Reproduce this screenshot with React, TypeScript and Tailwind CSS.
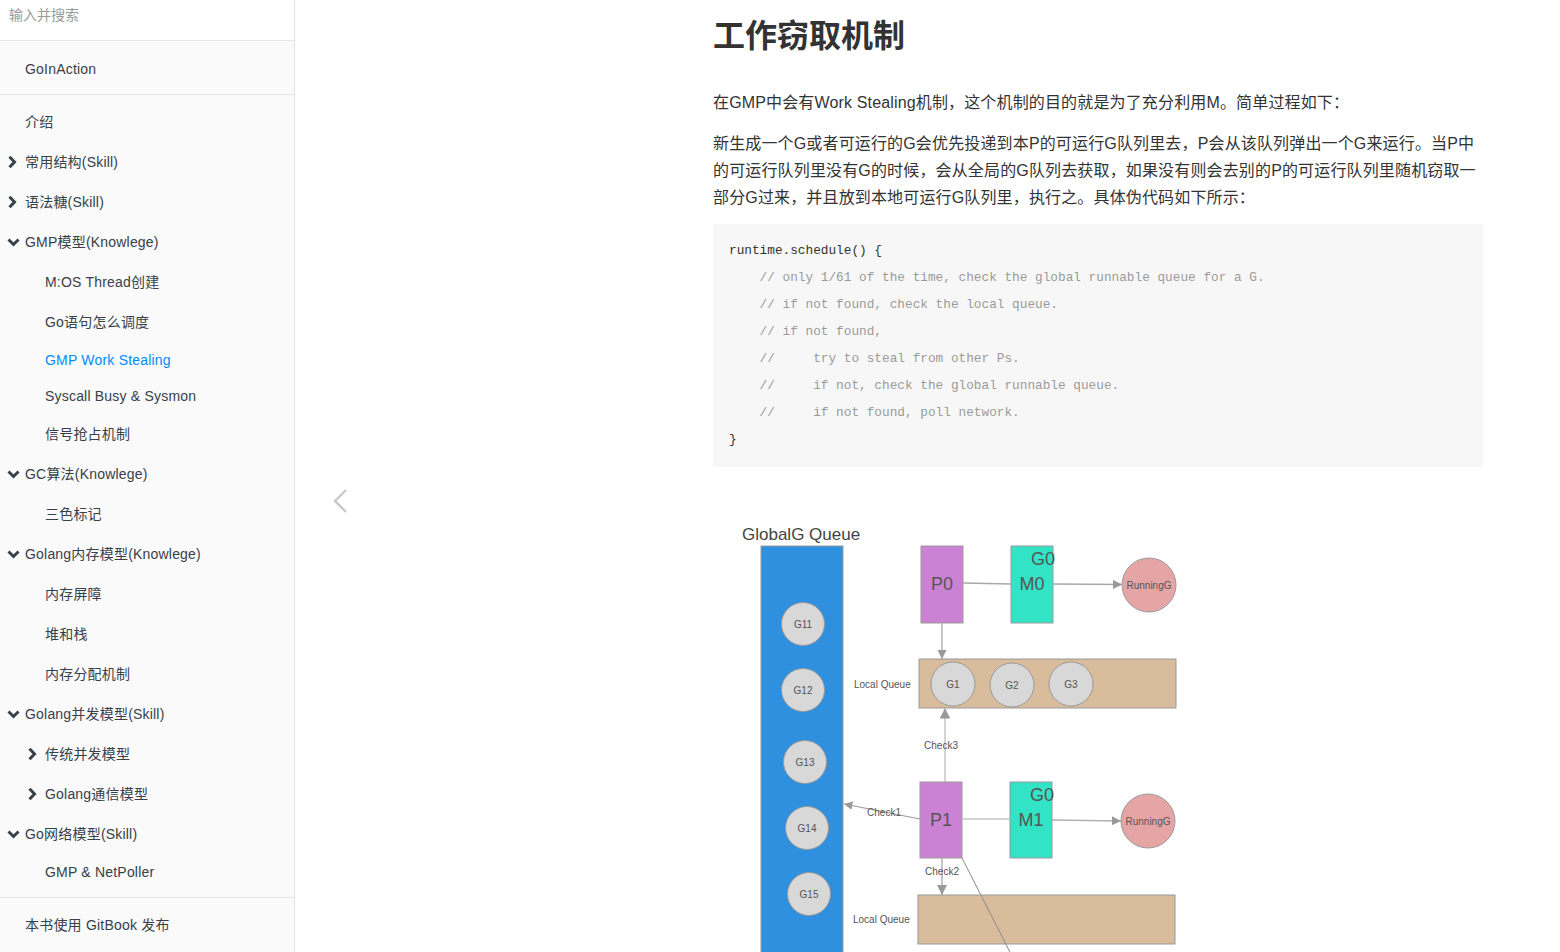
import React from 'react';

type NavItem = {
  label: string;
  level: 1 | 2;
  chevron?: 'right' | 'down';
  active?: boolean;
  tall?: boolean;
};

const nav: NavItem[] = [
  { label: '介绍', level: 1, tall: true },
  { label: '常用结构(Skill)', level: 1, chevron: 'right', tall: true },
  { label: '语法糖(Skill)', level: 1, chevron: 'right', tall: true },
  { label: 'GMP模型(Knowlege)', level: 1, chevron: 'down', tall: true },
  { label: 'M:OS Thread创建', level: 2, tall: true },
  { label: 'Go语句怎么调度', level: 2, tall: true },
  { label: 'GMP Work Stealing', level: 2, active: true },
  { label: 'Syscall Busy & Sysmon', level: 2 },
  { label: '信号抢占机制', level: 2, tall: true },
  { label: 'GC算法(Knowlege)', level: 1, chevron: 'down', tall: true },
  { label: '三色标记', level: 2, tall: true },
  { label: 'Golang内存模型(Knowlege)', level: 1, chevron: 'down', tall: true },
  { label: '内存屏障', level: 2, tall: true },
  { label: '堆和栈', level: 2, tall: true },
  { label: '内存分配机制', level: 2, tall: true },
  { label: 'Golang并发模型(Skill)', level: 1, chevron: 'down', tall: true },
  { label: '传统并发模型', level: 2, chevron: 'right', tall: true },
  { label: 'Golang通信模型', level: 2, chevron: 'right', tall: true },
  { label: 'Go网络模型(Skill)', level: 1, chevron: 'down', tall: true },
  { label: 'GMP & NetPoller', level: 2 },
];

const code: { text: string; dim?: boolean }[] = [
  { text: 'runtime.schedule() {' },
  { text: '    // only 1/61 of the time, check the global runnable queue for a G.', dim: true },
  { text: '    // if not found, check the local queue.', dim: true },
  { text: '    // if not found,', dim: true },
  { text: '    //     try to steal from other Ps.', dim: true },
  { text: '    //     if not, check the global runnable queue.', dim: true },
  { text: '    //     if not found, poll network.', dim: true },
  { text: '}' },
];

function Chevron({ dir }: { dir: 'right' | 'down' }) {
  if (dir === 'right') {
    return (
      <svg width="11" height="14" viewBox="0 0 11 14">
        <path d="M2.5 1.8 L7.5 7 L2.5 12.2" fill="none" stroke="#364149" strokeWidth="3" />
      </svg>
    );
  }
  return (
    <svg width="13" height="11" viewBox="0 0 13 11">
      <path d="M1.5 2.5 L6.5 7.5 L11.5 2.5" fill="none" stroke="#364149" strokeWidth="3" />
    </svg>
  );
}

function Sidebar() {
  return (
    <aside className="w-[295px] shrink-0 h-full bg-[#fafafa] border-r border-[#e2e2e2] flex flex-col">
      <div className="h-[41px] bg-white border-b border-[#e6e6e6]">
        <input
          placeholder="输入并搜索"
          className="w-full h-[40px] px-[9px] pt-[5px] pb-[15px] text-[14px] outline-none bg-transparent placeholder:text-[#9a9a9a]"
        />
      </div>
      <ul className="py-[10px] text-[14px] tracking-[0.2px] text-[#364149]">
        <li className="h-[36px] flex items-center pl-[25px]">GoInAction</li>
        <li className="h-px bg-[#e6e6e6] my-[7px]" />
        {nav.map((item) => (
          <li
            key={item.label}
            className={`${item.tall ? 'h-[40px]' : 'h-[36px]'} flex items-center ${
              item.level === 1 ? 'pl-[7px]' : 'pl-[27px]'
            } ${item.active ? 'text-[#008cff]' : ''}`}
          >
            <span className="w-[18px] flex items-center">
              {item.chevron && <Chevron dir={item.chevron} />}
            </span>
            <span>{item.label}</span>
          </li>
        ))}
        <li className="h-px bg-[#e6e6e6] my-[7px]" />
        <li className="h-[40px] flex items-center pl-[25px]">本书使用 GitBook 发布</li>
      </ul>
    </aside>
  );
}

function Diagram() {
  const box = '#9a9a9a';
  const line = '#a8a8a8';
  const circles = [
    { cx: 90, cy: 124, t: 'G11' },
    { cx: 90, cy: 190, t: 'G12' },
    { cx: 92, cy: 262, t: 'G13' },
    { cx: 94, cy: 328, t: 'G14' },
    { cx: 96, cy: 394, t: 'G15' },
    { cx: 240, cy: 184, t: 'G1' },
    { cx: 299, cy: 185, t: 'G2' },
    { cx: 358, cy: 184, t: 'G3' },
  ];
  return (
    <svg
      width="470"
      height="460"
      viewBox="0 0 470 460"
      className="block mt-[33px]"
      fontFamily='"Liberation Sans", Arial, sans-serif'
    >
      <defs>
        <marker id="arr" viewBox="0 0 10 10" refX="10" refY="5" markerWidth="7" markerHeight="7" orient="auto-start-reverse">
          <path d="M0 0 L10 5 L0 10 z" fill="#999" />
        </marker>
      </defs>
      <text x="29" y="40" fontSize="17" fill="#444">GlobalG Queue</text>
      <rect x="48" y="46" width="82" height="430" fill="#2e90de" stroke={box} />
      {circles.slice(0, 5).map((c) => (
        <g key={c.t}>
          <circle cx={c.cx} cy={c.cy} r="21.5" fill="#d8d8d8" stroke={box} />
          <text x={c.cx} y={c.cy + 3.5} fontSize="10" textAnchor="middle" fill="#555">{c.t}</text>
        </g>
      ))}

      {/* P0 / M0 */}
      <rect x="208" y="46" width="42" height="77" fill="#cb82d4" stroke={box} />
      <text x="229" y="90" fontSize="18" textAnchor="middle" fill="#555">P0</text>
      <rect x="298" y="46" width="42" height="77" fill="#33e3c5" stroke={box} />
      <text x="319" y="90" fontSize="18" textAnchor="middle" fill="#555">M0</text>
      <text x="330" y="65" fontSize="18" textAnchor="middle" fill="#555">G0</text>
      <line x1="250" y1="83" x2="298" y2="84" stroke={line} strokeWidth="1.3" />
      <line x1="340" y1="84" x2="409" y2="84.5" stroke={line} strokeWidth="1.3" markerEnd="url(#arr)" />
      <circle cx="436" cy="85" r="27" fill="#e5a5a5" stroke={box} />
      <text x="436" y="88.5" fontSize="10" textAnchor="middle" fill="#555">RunningG</text>
      <line x1="229" y1="123" x2="229" y2="159" stroke={line} strokeWidth="1.3" markerEnd="url(#arr)" />

      {/* Local queue 1 */}
      <text x="141" y="187.5" fontSize="10" fill="#555">Local Queue</text>
      <rect x="206" y="159" width="257" height="49" fill="#d8bc9b" stroke={box} />
      {circles.slice(5).map((c) => (
        <g key={c.t}>
          <circle cx={c.cx} cy={c.cy} r="22" fill="#d8d8d8" stroke={box} />
          <text x={c.cx} y={c.cy + 3.5} fontSize="10" textAnchor="middle" fill="#555">{c.t}</text>
        </g>
      ))}

      {/* Check3 */}
      <line x1="232" y1="282" x2="232" y2="208" stroke="#c4c4c4" strokeWidth="1.5" markerEnd="url(#arr)" />
      <text x="228" y="248.5" fontSize="10" textAnchor="middle" fill="#555">Check3</text>

      {/* P1 / M1 */}
      <rect x="207" y="282" width="42" height="76" fill="#cb82d4" stroke={box} />
      <text x="228" y="326" fontSize="18" textAnchor="middle" fill="#555">P1</text>
      <rect x="297" y="282" width="42" height="76" fill="#33e3c5" stroke={box} />
      <text x="318" y="326" fontSize="18" textAnchor="middle" fill="#555">M1</text>
      <text x="329" y="301" fontSize="18" textAnchor="middle" fill="#555">G0</text>
      <line x1="249" y1="319" x2="297" y2="319" stroke="#c4c4c4" strokeWidth="1.3" />
      <line x1="339" y1="320" x2="408" y2="321" stroke="#b0b0b0" strokeWidth="1.3" markerEnd="url(#arr)" />
      <circle cx="435" cy="321" r="27" fill="#e5a5a5" stroke={box} />
      <text x="435" y="324.5" fontSize="10" textAnchor="middle" fill="#555">RunningG</text>

      {/* Check1 */}
      <line x1="207" y1="319" x2="131" y2="304" stroke="#999" strokeWidth="1.2" markerEnd="url(#arr)" />
      <text x="171" y="315.5" fontSize="10" textAnchor="middle" fill="#555">Check1</text>

      {/* Check2 */}
      <line x1="229" y1="358" x2="229" y2="395" stroke="#b0b0b0" strokeWidth="1.5" markerEnd="url(#arr)" />
      <text x="229" y="374.5" fontSize="10" textAnchor="middle" fill="#555">Check2</text>

      {/* Local queue 2 */}
      <text x="140" y="422.5" fontSize="10" fill="#555">Local Queue</text>
      <rect x="205" y="395" width="257" height="49" fill="#d8bc9b" stroke={box} />
      <line x1="249" y1="358" x2="302" y2="462" stroke="#8a8a8a" strokeWidth="1" />
    </svg>
  );
}

export default function App() {
  return (
    <div className="flex w-full h-screen overflow-hidden bg-white text-[#333] font-['Liberation_Sans','Noto_Sans_CJK_SC',sans-serif]">
      <Sidebar />
      <main className="relative flex-1 h-full overflow-hidden">
        <button className="absolute left-[37px] top-[488px] w-[16px] h-[26px] flex items-center justify-center">
          <svg width="16" height="26" viewBox="0 0 16 26">
            <path d="M14 2 L3 13 L14 24" fill="none" stroke="#c8c8c8" strokeWidth="2.4" />
          </svg>
        </button>
        <div className="ml-[418px] w-[770px] pt-[17px]">
          <h1 className="text-[32px] leading-[38px] font-bold text-[#333]">工作窃取机制</h1>
          <p className="mt-[33.5px] text-[16px] leading-[27px] tracking-[0.15px]">
            在GMP中会有Work Stealing机制，这个机制的目的就是为了充分利用M。简单过程如下：
          </p>
          <p className="mt-[14px] text-[16px] leading-[27px] tracking-[0.15px]">
            新生成一个G或者可运行的G会优先投递到本P的可运行G队列里去，P会从该队列弹出一个G来运行。当P中
            <br />
            的可运行队列里没有G的时候，会从全局的G队列去获取，如果没有则会去别的P的可运行队列里随机窃取一
            <br />
            部分G过来，并且放到本地可运行G队列里，执行之。具体伪代码如下所示：
          </p>
          <pre className="mt-[13.5px] bg-[#f7f7f7] pt-[13px] pb-[14px] px-[16px] text-[12.75px] leading-[27px] font-['Liberation_Mono',monospace]">
            {code.map((l, i) => (
              <div key={i} className={l.dim ? 'text-[#9a9a9a]' : 'text-[#333]'}>
                {l.text}
              </div>
            ))}
          </pre>
          <Diagram />
        </div>
      </main>
    </div>
  );
}
